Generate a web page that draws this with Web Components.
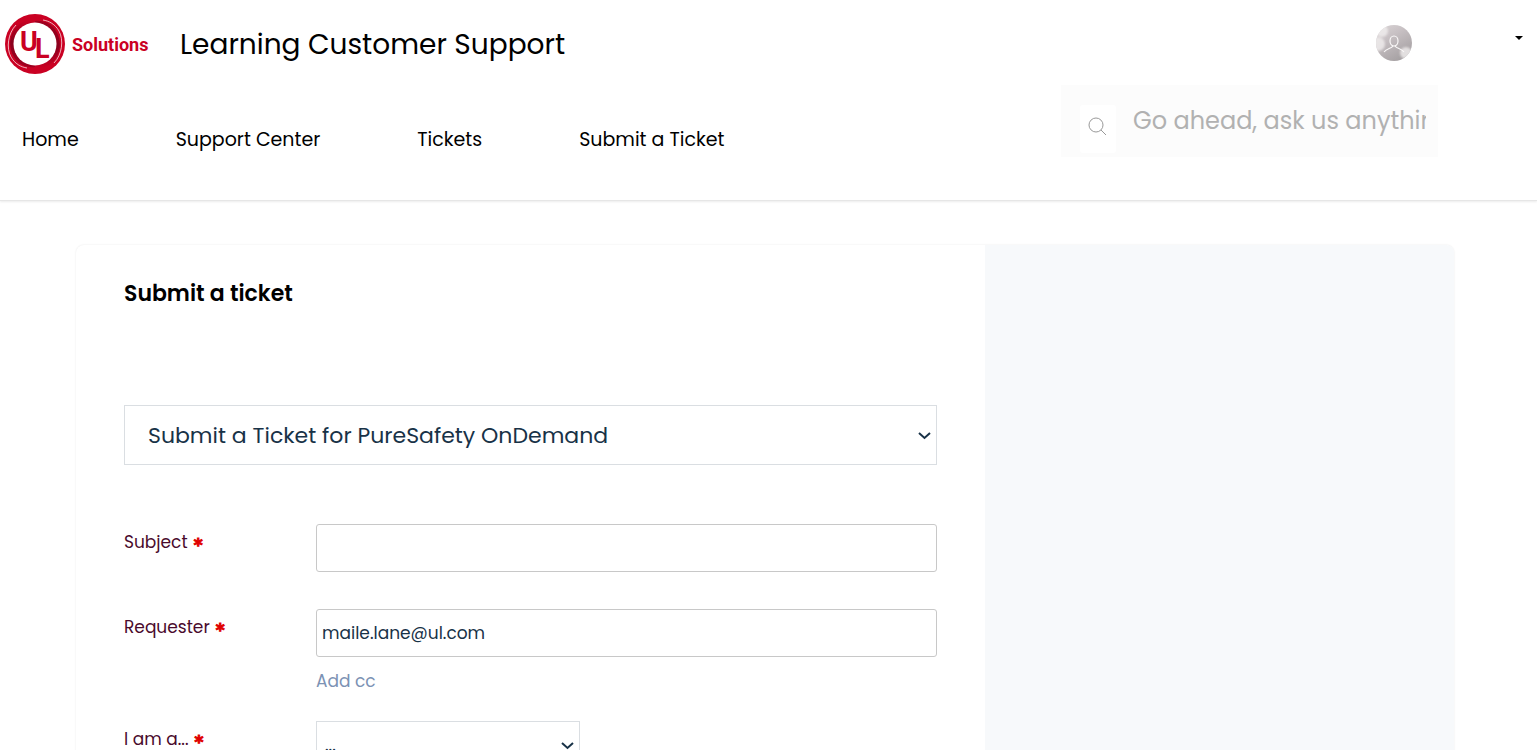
<!DOCTYPE html>
<html lang="en">
<head>
<meta charset="utf-8">
<title>Learning Customer Support</title>
<style>
body { margin: 0; background: #fff; color: #000; font-family: Poppins, Inter, sans-serif; font-size: 17px; line-height: 24px; }
</style>
</head>
<body>
<support-header heading="Learning Customer Support"></support-header>
<ticket-panel heading="Submit a ticket">
  <choice-select look="large" label="Ticket form" value="Submit a Ticket for PureSafety OnDemand"></choice-select>
  <field-row label="Subject"></field-row>
  <field-row label="Requester" value="maile.lane@ul.com"><a href="#cc">Add cc</a></field-row>
  <field-row label="I am a..." kind="select" value="..."></field-row>
</ticket-panel>

<script>
const mount = (host, html) => {
  const root = host.attachShadow({ mode: "open" });
  root.innerHTML = "<style>* { box-sizing: border-box; }</style>" + html;
  return root;
};

customElements.define("brand-logo", class extends HTMLElement {
  connectedCallback() {
    mount(this, `
<style>
:host { display: block; }
a { display: block; }
svg { display: block; }
text { fill: #ca0123; font-family: Roboto, sans-serif; font-weight: 700; }
</style>
<a href="#home" aria-label="UL Solutions">
<svg width="150" height="60" viewBox="0 0 150 60">
  <defs>
    <linearGradient id="left" x1="0" y1="0" x2="0" y2="1">
      <stop offset="0" stop-color="#ca0123"/><stop offset=".45" stop-color="#8a001d"/><stop offset="1" stop-color="#a0001f"/>
    </linearGradient>
    <linearGradient id="right" x1="0" y1="0" x2="0" y2="1">
      <stop offset="0" stop-color="#a0001f"/><stop offset=".55" stop-color="#8a001d"/><stop offset="1" stop-color="#ca0123"/>
    </linearGradient>
  </defs>
  <circle cx="30" cy="30" r="30" fill="#ca0123"/>
  <path fill="url(#left)" d="M22 6C4 12 0 34 12 47C17 52 24 54 30 53V6z"/>
  <path fill="url(#right)" d="M38 54C56 48 60 26 48 13C43 8 36 6 30 7V54z"/>
  <circle cx="30" cy="30" r="21.500" fill="#fff"/>
  <path fill="none" stroke="#fff" stroke-width="1" stroke-opacity=".7" d="M11 11C3 19 1 34 6 43C10 50 16 53 22 54M49 49C57 41 59 26 54 17C50 10 44 7 38 6"/>
  <text x="15" y="37" font-size="27">U</text>
  <text x="30" y="44" font-size="27">L</text>
  <text x="67" y="37" font-size="18">Solutions</text>
</svg></a>`);
  }
});

customElements.define("user-menu", class extends HTMLElement {
  connectedCallback() {
    mount(this, `
<style>
:host { display: block; }
button { display: flex; align-items: center; gap: 103px; padding: 0; border: 0; background: none; }
svg { display: block; }
.caret { margin-bottom: 10px; }
</style>
<button aria-label="Account menu">
<svg width="36" height="36" viewBox="0 0 36 36">
  <defs>
    <clipPath id="round"><circle cx="18" cy="18" r="18"/></clipPath>
    <linearGradient id="bg" x1="0" y1="0" x2=".6" y2="1"><stop offset="0" stop-color="#dbd6d7"/><stop offset=".4" stop-color="#c8c1c4"/><stop offset="1" stop-color="#a6a1a3"/></linearGradient>
    <filter id="soft"><feGaussianBlur stdDeviation="1"/></filter>
  </defs>
  <g clip-path="url(#round)">
    <rect width="36" height="36" fill="url(#bg)"/>
    <g filter="url(#soft)" fill="#f1eeee" opacity=".8"><circle cx="6" cy="6" r="6"/><circle cx="2" cy="19" r="7"/><circle cx="30" cy="28" r="6"/></g>
  </g>
  <g fill="none" stroke="#faf8f8" stroke-width="1.2"><ellipse cx="18" cy="16" rx="4" ry="5"/><path d="M8 27C11 23 15 24 17 21M19 21C21 24 25 23 28 27"/></g>
</svg>
<svg class="caret" width="8" height="4" viewBox="0 0 8 4"><path d="M0 0h8L4 4z"/></svg>
</button>`);
  }
});

customElements.define("search-box", class extends HTMLElement {
  connectedCallback() {
    mount(this, `
<style>
:host { display: block; width: 377px; }
form { display: flex; height: 72px; padding: 0 12px 0 19px; background: #fcfcfc; }
button { width: 36px; height: 48px; margin-top: 20px; padding: 0 2px 6px 0; border: 0; border-radius: 3px; background: #fff; display: grid; place-items: center; }
input { flex: 1; min-width: 0; height: 72px; padding: 0 0 2px 17px; border: 0; outline: 0; background: none; font: inherit; font-size: 24px; }
input::placeholder { color: #b1b1b1; opacity: 1; }
</style>
<form role="search">
<button type="button" aria-label="Search"><svg width="18" height="18" viewBox="0 0 18 18" fill="none" stroke="#999"><circle cx="8" cy="8" r="7"/><path d="M13 13l5 5"/></svg></button>
<input type="text" aria-label="Search" placeholder="Go ahead, ask us anything...">
</form>`);
  }
});

customElements.define("site-nav", class extends HTMLElement {
  connectedCallback() {
    mount(this, `
<style>
:host { display: block; }
nav { display: flex; gap: 97px; font-size: 19px; line-height: 32px; }
a { color: #000; text-decoration: none; white-space: nowrap; }
</style>
<nav><a href="#home">Home</a><a href="#support">Support Center</a><a href="#tickets">Tickets</a><a href="#submit">Submit a Ticket</a></nav>`);
  }
});

customElements.define("support-header", class extends HTMLElement {
  connectedCallback() {
    mount(this, `
<style>
:host { display: block; border-bottom: 1px solid #e6e6e6; box-shadow: 0 1px 2px rgba(0,0,0,.08); }
.top { display: flex; align-items: center; height: 85px; padding: 3px 14px 0 5px; }
h1 { flex: 1; margin: 0 0 0 25px; padding-top: 2px; font-size: 28px; line-height: 40px; font-weight: 400; }
.bottom { display: flex; justify-content: space-between; align-items: flex-start; height: 115px; padding: 0 99px 0 22px; }
user-menu { margin-bottom: 2px; }
site-nav { margin-top: 39px; }
</style>
<header>
<div class="top"><brand-logo></brand-logo><h1>${this.getAttribute("heading")}</h1><user-menu></user-menu></div>
<div class="bottom"><site-nav></site-nav><search-box></search-box></div>
</header>`);
  }
});

customElements.define("choice-select", class extends HTMLElement {
  connectedCallback() {
    mount(this, `
<style>
:host { display: grid; align-items: center; }
select, svg { grid-area: 1 / 1; }
select { appearance: none; width: 100%; height: 48px; padding: 0 8px; border: 1px solid #dadee2; border-radius: 0; background: #fff; color: #183247; font: inherit; }
svg { justify-self: end; margin: 2px 6px 0 0; pointer-events: none; }
:host([look="large"]) select { height: 60px; padding: 2px 23px 0; font-size: 22px; }
</style>
<select aria-label="${this.getAttribute("label")}"><option>${this.getAttribute("value")}</option></select>
<svg width="13" height="8" viewBox="0 0 13 8" fill="none" stroke="#183247" stroke-width="2"><path d="M1 1l5.500 5l5.500-5"/></svg>`);
  }
});

customElements.define("field-row", class extends HTMLElement {
  connectedCallback() {
    const label = this.getAttribute("label");
    const value = this.getAttribute("value") || "";
    const control = this.getAttribute("kind") === "select"
      ? `<choice-select label="${label}" value="${value}"></choice-select>`
      : `<input id="control" type="text" value="${value}">`;
    mount(this, `
<style>
:host { display: grid; grid-template-columns: 192px 1fr; }
label { display: flex; gap: 6px; height: 24px; margin-top: 6px; color: #4a0a2c; }
span { padding-top: 3px; color: #e00000; font-family: "DejaVu Sans", sans-serif; font-weight: 700; -webkit-text-stroke: 1px #e00000; }
input { display: block; width: 100%; height: 48px; padding: 0 5px; border: 1px solid #c8c8c8; border-radius: 3px; background: #fff; color: #183247; font: inherit; }
choice-select { width: 264px; }
::slotted(a) { display: block; width: max-content; margin-top: 12px; color: #7c92b4; text-decoration: none; }
</style>
<label for="control">${label}<span>*</span></label>
<div>${control}<slot></slot></div>`);
  }
});

customElements.define("ticket-panel", class extends HTMLElement {
  connectedCallback() {
    mount(this, `
<style>
:host { display: grid; grid-template-columns: 33fr 17fr; margin: 44px 83px 48px 76px; border-radius: 8px; overflow: hidden; box-shadow: 0 0 2px rgba(0,0,0,.1); }
main { min-width: 0; padding: 32px 48px 48px; }
aside { background: #f7f9fb; }
h2 { margin: 0 0 96px; padding-top: 1px; font-size: 22px; line-height: 32px; height: 32px; font-weight: 600; }
::slotted(choice-select) { margin-bottom: 59px; }
::slotted(field-row:nth-of-type(1)) { margin-bottom: 37px; }
::slotted(field-row:nth-of-type(2)) { margin-bottom: 28px; }
</style>
<main><h2>${this.getAttribute("heading")}</h2><slot></slot></main>
<aside></aside>`);
  }
});
</script>
</body>
</html>
